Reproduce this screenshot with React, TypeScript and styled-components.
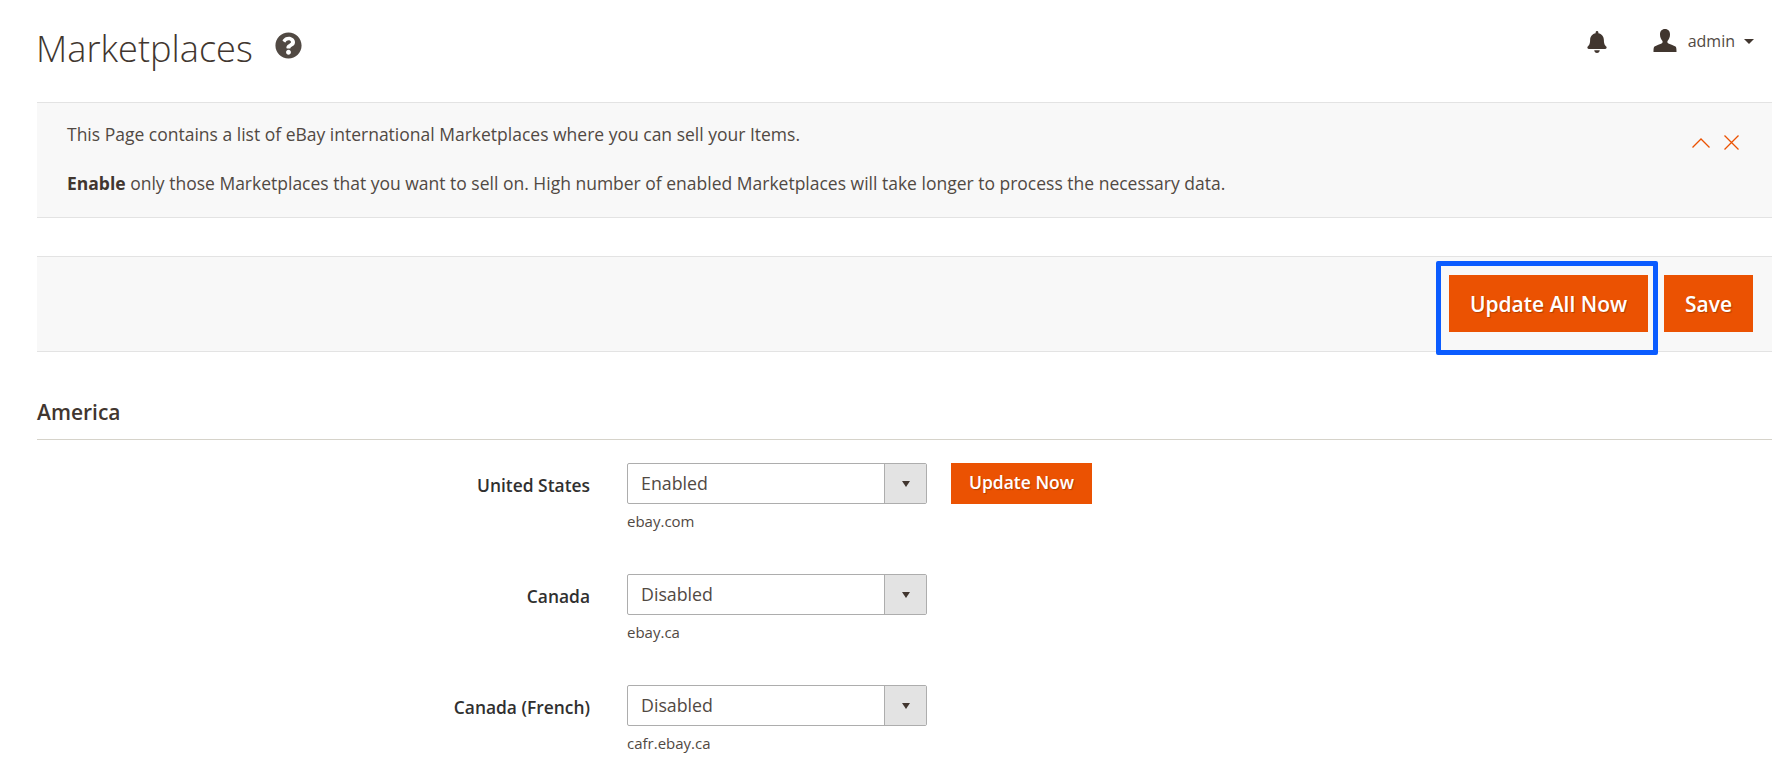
import React from "react";
import styled, { createGlobalStyle } from "styled-components";
import { FaBell, FaQuestionCircle } from "react-icons/fa";

const COLORS = {
  text: "#41362f",
  heading: "#41362f",
  orange: "#eb5202",
  panel: "#f8f8f8",
  line: "#e3e3e3",
};

const GlobalStyle = createGlobalStyle`
  html, body {
    margin: 0;
    padding: 0;
    background: #fff;
    overflow: hidden;
  }
  body {
    font-family: "Open Sans", "Liberation Sans", sans-serif;
    color: ${COLORS.text};
  }
`;

const MARKETPLACES = [
  { name: "United States", value: "Enabled", url: "ebay.com", update: true },
  { name: "Canada", value: "Disabled", url: "ebay.ca", update: false },
  { name: "Canada (French)", value: "Disabled", url: "cafr.ebay.ca", update: false },
];

const App: React.FC = () => (
  <Page>
    <GlobalStyle />
    <Header>
      <TitleGroup>
        <Title>Marketplaces</Title>
        <HelpIcon />
      </TitleGroup>
      <Actions>
        <BellIcon />
        <UserMenu>
          <svg width="24" height="24" viewBox="0 0 24 24" fill="#41362f">
            <path d="M12 0c3.300 0 5 2.400 5 5.400 0 2.600-1 4.900-2.300 6.300-.5.600-.4 1.900.3 2.500 1.600 1 5.800 2.100 7.500 3.300.9.700 1 2.600 1 5.500H.5c0-2.900.1-4.800 1-5.500 1.700-1.200 5.900-2.300 7.500-3.300.7-.6.800-1.900.3-2.500C8 10.300 7 8 7 5.400 7 2.400 8.700 0 12 0z" />
          </svg>
          <UserName>admin</UserName>
          <Caret />
        </UserMenu>
      </Actions>
    </Header>

    <Notice>
      <NoticeText>
        <p>This Page contains a list of eBay international Marketplaces where you can sell your Items.</p>
        <p>
          <strong>Enable</strong> only those Marketplaces that you want to sell on. High number of enabled
          Marketplaces will take longer to process the necessary data.
        </p>
      </NoticeText>
      <NoticeControls>
        <svg width="18" height="10" viewBox="0 0 18 10" fill="none" stroke="#eb5202" strokeWidth="1.300">
          <path d="M.5 9.500 9 1l8.500 8.500" />
        </svg>
        <svg width="15" height="15" viewBox="0 0 15 15" fill="none" stroke="#eb5202" strokeWidth="1.300">
          <path d="M.5.500l14 14M14.500.500l-14 14" />
        </svg>
      </NoticeControls>
    </Notice>

    <Toolbar>
      <HighlightedAction>
        <MainButton>Update All Now</MainButton>
      </HighlightedAction>
      <MainButton $narrow>Save</MainButton>
    </Toolbar>

    <SectionTitle>America</SectionTitle>

    <Rows>
      {MARKETPLACES.map((item) => (
        <Row key={item.name}>
          <RowLabel>{item.name}</RowLabel>
          <Control>
            <SelectBox>
              <SelectValue>{item.value}</SelectValue>
              <SelectArrow />
            </SelectBox>
            <Note>{item.url}</Note>
          </Control>
          {item.update && <SmallButton>Update Now</SmallButton>}
        </Row>
      ))}
    </Rows>
  </Page>
);

export default App;

const Page = styled.div`
  width: 1791px;
  height: 757px;
  box-sizing: border-box;
  padding: 0 19px 0 37px;
  overflow: hidden;
`;

const Header = styled.header`
  height: 102px;
  display: flex;
  justify-content: space-between;
  align-items: flex-start;
`;

const TitleGroup = styled.div`
  display: flex;
  align-items: center;
  gap: 22px;
  padding-top: 24px;
  margin-left: -1px;
`;

const Title = styled.h1`
  margin: 0;
  font-size: 36.200px;
  line-height: 49px;
  font-weight: 300;
  color: ${COLORS.heading};
`;

const HelpIcon = styled(FaQuestionCircle)`
  width: 27px;
  height: 27px;
  color: #514943;
  margin-top: -7px;
`;

const Actions = styled.div`
  display: flex;
  align-items: center;
  padding-top: 31px;
  margin-right: 18px;
`;

const BellIcon = styled(FaBell)`
  width: 20px;
  height: 22px;
  color: #41362f;
  margin-right: 46px;
`;

const UserMenu = styled.div`
  display: flex;
  align-items: center;
  margin-top: -2px;
`;

const UserName = styled.span`
  font-size: 16px;
  line-height: 20px;
  margin-left: 11px;
  color: #514943;
`;

const Caret = styled.span`
  width: 0;
  height: 0;
  margin-left: 9px;
  border-left: 5px solid transparent;
  border-right: 5px solid transparent;
  border-top: 5px solid #41362f;
`;

const Notice = styled.section`
  height: 116px;
  box-sizing: border-box;
  background: ${COLORS.panel};
  border-top: 1px solid ${COLORS.line};
  border-bottom: 1px solid ${COLORS.line};
  padding: 19px 33px 0 30px;
  display: flex;
  justify-content: space-between;
`;

const NoticeText = styled.div`
  font-size: 17.500px;
  line-height: 24px;
  color: #514943;

  p {
    margin: 0 0 25px;
  }

  strong {
    font-weight: 700;
    color: #41362f;
  }
`;

const NoticeControls = styled.div`
  display: flex;
  align-items: center;
  gap: 14px;
  height: 15px;
  margin-top: 13px;
`;

const Toolbar = styled.section`
  height: 96px;
  margin-top: 38px;
  box-sizing: border-box;
  background: ${COLORS.panel};
  border-top: 1px solid ${COLORS.line};
  border-bottom: 1px solid ${COLORS.line};
  padding: 0 19px 1px 0;
  display: flex;
  align-items: center;
  justify-content: flex-end;
  gap: 16px;
`;

const HighlightedAction = styled.div`
  position: relative;

  &::after {
    content: "";
    position: absolute;
    inset: -14px -10px -23px -13px;
    border: 5px solid #0b5cff;
    border-radius: 2px;
    pointer-events: none;
  }
`;

const MainButton = styled.button<{ $narrow?: boolean }>`
  display: block;
  width: ${(p) => (p.$narrow ? "89px" : "199px")};
  height: 57px;
  border: 0;
  padding: 0;
  background: ${COLORS.orange};
  color: #fff;
  font-family: inherit;
  font-size: 21px;
  font-weight: 600;
  text-shadow: 1px 1px 1px rgba(0, 0, 0, 0.25);
`;

const SectionTitle = styled.h2`
  margin: 46px 0 0;
  height: 41px;
  border-bottom: 1px solid #d6d3ca;
  font-size: 21px;
  line-height: 28px;
  font-weight: 600;
  color: ${COLORS.heading};
`;

const Rows = styled.div`
  padding-top: 23px;
  display: flex;
  flex-direction: column;
  gap: 43px;
`;

const Row = styled.div`
  display: grid;
  grid-template-columns: 590px 300px auto;
  column-gap: 0;
  align-items: start;
`;

const RowLabel = styled.label`
  padding-right: 37px;
  text-align: right;
  font-size: 17.400px;
  font-weight: 600;
  line-height: 44px;
  color: #303030;
`;

const Control = styled.div`
  width: 300px;
`;

const SelectBox = styled.div`
  height: 41px;
  box-sizing: border-box;
  display: flex;
  background: #fff;
  border: 1px solid #adadad;
  border-radius: 2px;
`;

const SelectValue = styled.span`
  flex: 1;
  padding-left: 13px;
  font-size: 17.800px;
  line-height: 38px;
  color: #514943;
`;

const SelectArrow = styled.span`
  width: 41px;
  display: flex;
  align-items: center;
  justify-content: center;
  background: #e3e3e3;
  border-left: 1px solid #adadad;

  &::after {
    content: "";
    border-left: 4.500px solid transparent;
    border-right: 4.500px solid transparent;
    border-top: 6px solid #41362f;
  }
`;

const Note = styled.div`
  margin-top: 7px;
  font-size: 15px;
  line-height: 20px;
  color: #514943;
`;

const SmallButton = styled.button`
  margin-left: 24px;
  width: 141px;
  height: 41px;
  border: 0;
  padding: 0 0 3px;
  background: ${COLORS.orange};
  color: #fff;
  font-family: inherit;
  font-size: 17.500px;
  font-weight: 600;
  text-shadow: 1px 1px 1px rgba(0, 0, 0, 0.25);
`;
